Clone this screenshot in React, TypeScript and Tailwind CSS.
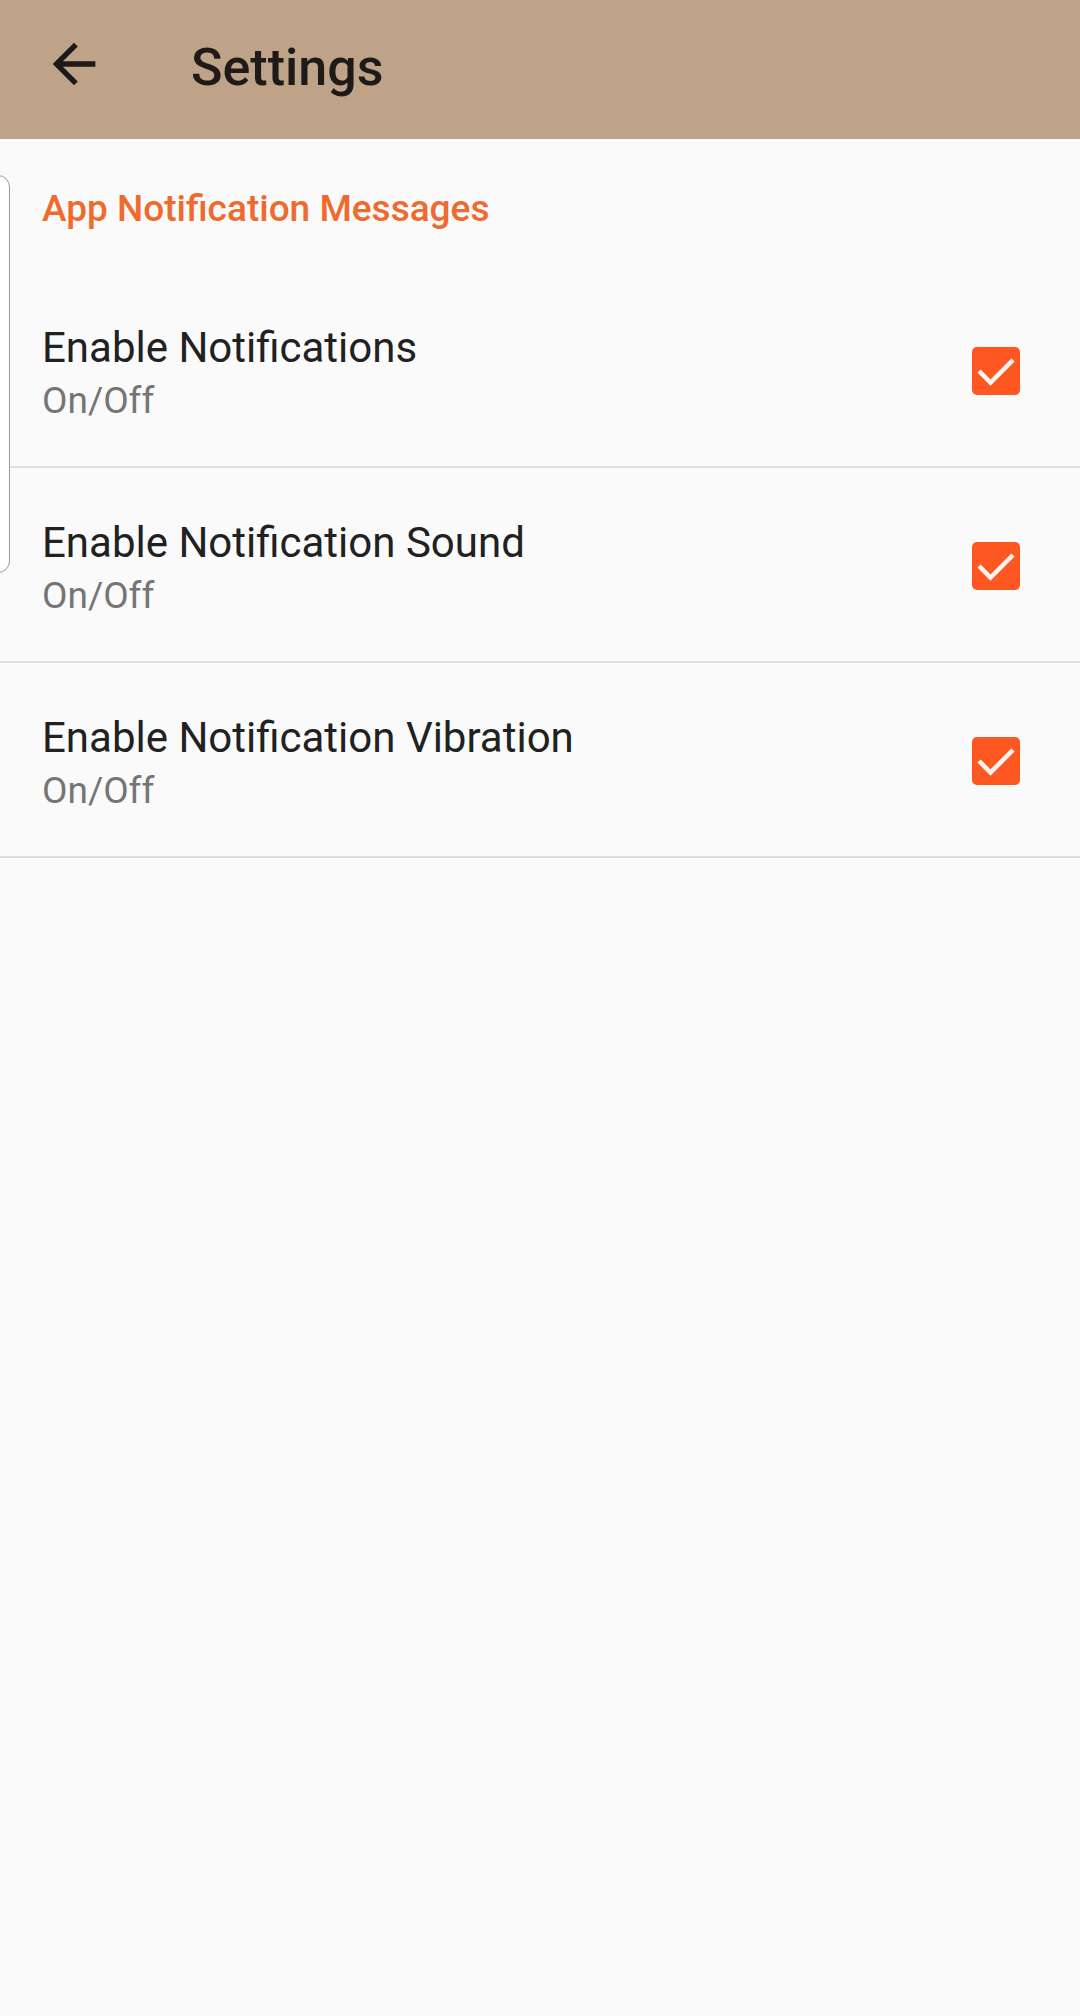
const items = [
  { title: "Enable Notifications", sub: "On/Off" },
  { title: "Enable Notification Sound", sub: "On/Off" },
  { title: "Enable Notification Vibration", sub: "On/Off" },
];

function Checkbox() {
  return (
    <div className="flex h-[48px] w-[48px] shrink-0 items-center justify-center rounded-[5px] bg-[#ff5722]">
      <svg width="48" height="48" viewBox="0 0 48 48" fill="none">
        <polyline points="7,24 18.5,35.5 41,13" stroke="#fff6ef" strokeWidth="4.5" strokeLinecap="butt" strokeLinejoin="miter" />
      </svg>
    </div>
  );
}

export default function App() {
  return (
    <div className="relative min-h-[2016px] w-full bg-[#fafafa] font-['Roboto',sans-serif]">
      <header className="flex h-[139px] items-start bg-[#bfa388]">
        <button className="ml-[42px] mt-[32px] flex h-[64px] w-[64px] items-center justify-center">
          <svg width="64" height="64" viewBox="0 0 24 24" fill="#1d1a17">
            <path d="M20 11H7.83l5.59-5.59L12 4l-8 8 8 8 1.41-1.41L7.83 13H20v-2z" />
          </svg>
        </button>
        <h1 className="ml-[85px] mt-[37px] text-[52px] leading-[61px] font-medium text-[#1d1a17]">Settings</h1>
      </header>

      <div className="h-[134px] pl-[42px] pt-[48px]">
        <h2 className="text-[37px] leading-[43px] font-medium text-[#ef6a2f]">App Notification Messages</h2>
      </div>

      {items.map((it) => (
        <div key={it.title}>
          <div className="flex h-[193px] items-center pl-[42px] pr-[60px] pt-[2px]">
            <div className="mt-[5px] flex flex-1 flex-col gap-[6px]">
              <div className="text-[42px] leading-[50px] text-[#212121]">{it.title}</div>
              <div className="text-[37px] leading-[44px] text-[#757575]">{it.sub}</div>
            </div>
            <Checkbox />
          </div>
          <div className="h-[2px] bg-[#dfdfdf]" />
        </div>
      ))}

      {/* edge of an overlay panel peeking in from the left */}
      <div className="absolute left-[-30px] top-[175px] h-[398px] w-[40px] rounded-[12px] border border-[#9a9a9a] bg-white" />
    </div>
  );
}
